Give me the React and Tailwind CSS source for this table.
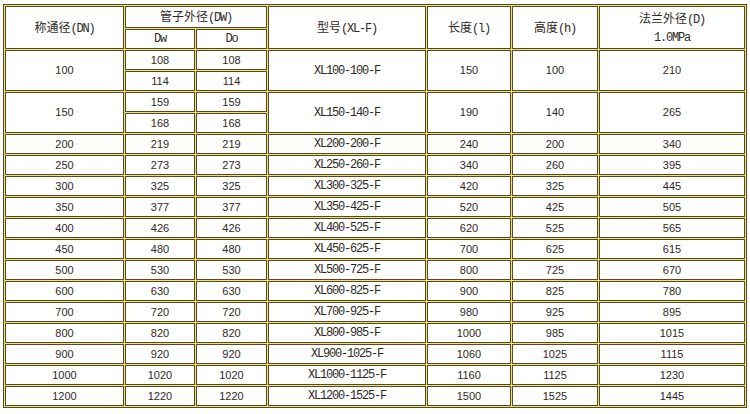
import React from 'react';

// 数据：称通径, 管子外径 [Dw, Do] 列表, 型号, 长度, 高度, 法兰外径
const rows = [
  { dn: '100', pipes: [['108', '108'], ['114', '114']], model: 'XL100-100-F', l: '150', h: '100', d: '210' },
  { dn: '150', pipes: [['159', '159'], ['168', '168']], model: 'XL150-140-F', l: '190', h: '140', d: '265' },
  { dn: '200', pipes: [['219', '219']], model: 'XL200-200-F', l: '240', h: '200', d: '340' },
  { dn: '250', pipes: [['273', '273']], model: 'XL250-260-F', l: '340', h: '260', d: '395' },
  { dn: '300', pipes: [['325', '325']], model: 'XL300-325-F', l: '420', h: '325', d: '445' },
  { dn: '350', pipes: [['377', '377']], model: 'XL350-425-F', l: '520', h: '425', d: '505' },
  { dn: '400', pipes: [['426', '426']], model: 'XL400-525-F', l: '620', h: '525', d: '565' },
  { dn: '450', pipes: [['480', '480']], model: 'XL450-625-F', l: '700', h: '625', d: '615' },
  { dn: '500', pipes: [['530', '530']], model: 'XL500-725-F', l: '800', h: '725', d: '670' },
  { dn: '600', pipes: [['630', '630']], model: 'XL600-825-F', l: '900', h: '825', d: '780' },
  { dn: '700', pipes: [['720', '720']], model: 'XL700-925-F', l: '980', h: '925', d: '895' },
  { dn: '800', pipes: [['820', '820']], model: 'XL800-985-F', l: '1000', h: '985', d: '1015' },
  { dn: '900', pipes: [['920', '920']], model: 'XL900-1025-F', l: '1060', h: '1025', d: '1115' },
  { dn: '1000', pipes: [['1020', '1020']], model: 'XL1000-1125-F', l: '1160', h: '1125', d: '1230' },
  { dn: '1200', pipes: [['1220', '1220']], model: 'XL1200-1525-F', l: '1500', h: '1525', d: '1445' },
];

const cell = 'border border-[#5a4a14] bg-white text-center align-middle p-0';
const num = "font-['Liberation_Sans',Arial,sans-serif] text-[11px] text-[#2e2a1e]";
const mono = "font-['Liberation_Mono','Courier_New',monospace] text-[12px] tracking-[-1.2px] text-[#2e2a1e]";
const cjk = "font-['Noto_Sans_CJK_SC','Liberation_Sans',sans-serif] text-[12px] text-[#2e2a1e]";

const Lat = ({ children }) => <span className={mono}>{children}</span>;

export default function App() {
  return (
    <div className="w-[750px] h-[414px] bg-white pl-[3px] pt-[4px]">
      <table className="table-fixed border-separate border-spacing-[1px] border border-[#5a4a14] bg-[#ece08e] w-[744px]">
        <colgroup>
          <col className="w-[119px]" />
          <col className="w-[70px]" />
          <col className="w-[71px]" />
          <col className="w-[158px]" />
          <col className="w-[84px]" />
          <col className="w-[86px]" />
          <col />
        </colgroup>
        <thead>
          <tr className="h-[22px]">
            <th rowSpan={2} className={`${cell} ${cjk} font-normal`}>
              称通径<Lat>(DN)</Lat>
            </th>
            <th colSpan={2} className={`${cell} ${cjk} font-normal`}>
              管子外径<Lat>(DW)</Lat>
            </th>
            <th rowSpan={2} className={`${cell} ${cjk} font-normal`}>
              型号<Lat>(XL-F)</Lat>
            </th>
            <th rowSpan={2} className={`${cell} ${cjk} font-normal`}>
              长度<Lat>(l)</Lat>
            </th>
            <th rowSpan={2} className={`${cell} ${cjk} font-normal`}>
              高度<Lat>(h)</Lat>
            </th>
            <th rowSpan={2} className={`${cell} ${cjk} font-normal leading-[18px]`}>
              <div>法兰外径<Lat>(D)</Lat></div>
              <div className={`${mono} leading-[18px]`}>1.0MPa</div>
            </th>
          </tr>
          <tr className="h-[20px]">
            <th className={`${cell} ${mono} font-normal`}>Dw</th>
            <th className={`${cell} ${mono} font-normal`}>Do</th>
          </tr>
        </thead>
        <tbody>
          {rows.map((r) =>
            r.pipes.map((p, i) => (
              <tr key={`${r.dn}-${i}`} className="h-[20px]">
                {i === 0 && (
                  <td rowSpan={r.pipes.length} className={`${cell} ${num}`}>{r.dn}</td>
                )}
                <td className={`${cell} ${num}`}>{p[0]}</td>
                <td className={`${cell} ${num}`}>{p[1]}</td>
                {i === 0 && (
                  <>
                    <td rowSpan={r.pipes.length} className={`${cell} ${mono}`}>{r.model}</td>
                    <td rowSpan={r.pipes.length} className={`${cell} ${num}`}>{r.l}</td>
                    <td rowSpan={r.pipes.length} className={`${cell} ${num}`}>{r.h}</td>
                    <td rowSpan={r.pipes.length} className={`${cell} ${num}`}>{r.d}</td>
                  </>
                )}
              </tr>
            ))
          )}
        </tbody>
      </table>
    </div>
  );
}
